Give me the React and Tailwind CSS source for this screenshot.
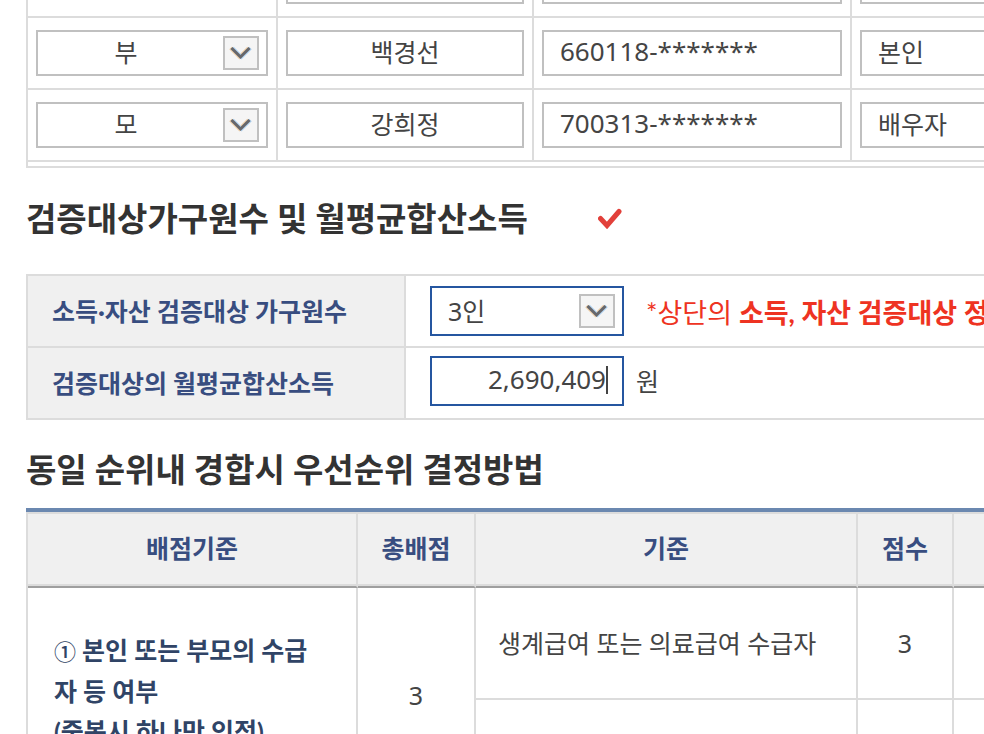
import React from "react";

const KOREAN = "font-['Lato','Noto_Sans_CJK_KR',sans-serif]";
const MIXED = "font-['Noto_Sans','Noto_Sans_CJK_KR',sans-serif]";

function Arrow({ className }) {
  return (
    <span
      className={`pointer-events-none absolute right-[9px] flex h-[34px] w-9 items-center justify-center border-2 border-[#c0c0c0] bg-[#f5f5f5] ${className}`}
    >
      <svg width="24" height="18" viewBox="0 0 24 18" fill="none" aria-hidden="true">
        <path d="M2.5 4 L11.5 13 L20.5 4" stroke="#efcfa8" strokeWidth="3.6" transform="translate(-1 0)" />
        <path d="M2.5 4 L11.5 13 L20.5 4" stroke="#b0d3f2" strokeWidth="3.6" transform="translate(1 0)" />
        <path d="M2.5 4 L11.5 13 L20.5 4" stroke="#67676b" strokeWidth="3" />
      </svg>
    </span>
  );
}

function RelationSelect({ value, label }) {
  return (
    <div className="relative">
      <select
        aria-label={label}
        defaultValue={value}
        className="block h-[46px] w-full appearance-none border-2 border-[#c0c0c0] bg-white pr-[52px] pb-[2px] text-center [text-align-last:center]"
      >
        <option>{value}</option>
      </select>
      <Arrow className="top-[6px]" />
    </div>
  );
}

function Field({ value, label, className }) {
  return (
    <input
      aria-label={label}
      defaultValue={value}
      className={`block h-[46px] w-full border-2 border-[#c0c0c0] bg-white px-4 pb-1 ${className}`}
    />
  );
}

const members = [
  { relation: "", name: "", number: "", role: "" },
  { relation: "부", name: "백경선", number: "660118-*******", role: "본인" },
  { relation: "모", name: "강희정", number: "700313-*******", role: "배우자" },
];

function MemberTable() {
  const cell = "h-[72px] border-r-2 border-b-2 border-[#dcdcdc] px-2 py-0";
  return (
    <div className="border-b-2 border-l-2 border-[#dcdcdc] pb-1">
      <table className="w-full table-fixed border-separate border-spacing-0 border-t-2 border-[#dcdcdc]">
        <colgroup>
          <col className="w-[250px]" />
          <col className="w-[256px]" />
          <col className="w-[318px]" />
          <col />
        </colgroup>
        <tbody>
          {members.map((m, i) => (
            <tr key={i}>
              <td className={cell}>
                {m.relation && <RelationSelect value={m.relation} label="관계" />}
              </td>
              <td className={cell}><Field value={m.name} label="성명" className="text-center" /></td>
              <td className={cell}><Field value={m.number} label="주민등록번호" className="text-[26px]" /></td>
              <td className={cell}><Field value={m.role} label="구분" className="text-left" /></td>
            </tr>
          ))}
        </tbody>
      </table>
    </div>
  );
}

function IncomeTable() {
  const th =
    `h-[72px] border-r-2 border-b-2 border-[#dcdcdc] bg-[#f0f0f0] py-0 pl-6 text-left font-bold whitespace-nowrap text-[#384d80] ${KOREAN}`;
  const td = "h-[72px] border-b-2 border-[#dcdcdc] py-0 pl-6";
  const box = "block h-[50px] w-full appearance-none border-2 border-[#2556a0] bg-white px-4 outline-none";
  return (
    <table className="w-full table-fixed border-separate border-spacing-0 border-t-2 border-l-2 border-[#dcdcdc]">
      <colgroup>
        <col className="w-[378px]" />
        <col />
      </colgroup>
      <tbody>
        <tr>
          <th scope="row" className={th}>
            <label htmlFor="household">소득·자산 검증대상 가구원수</label>
          </th>
          <td className={td}>
            <div className="flex items-center gap-[22px]">
              <div className="relative w-[194px] shrink-0">
                <select id="household" defaultValue="3인" className={box}>
                  <option>3인</option>
                </select>
                <Arrow className="top-2" />
              </div>
              <p className={`pt-1 text-[27px] leading-10 whitespace-nowrap text-[#ee3322] ${KOREAN}`}>
                *상단의 <strong className="font-bold">소득, 자산 검증대상 정보</strong>
              </p>
            </div>
          </td>
        </tr>
        <tr>
          <th scope="row" className={th}>
            <label htmlFor="income">검증대상의 월평균합산소득</label>
          </th>
          <td className={`${td} pb-1`}>
            <div className="flex items-center gap-3">
              <div className="relative w-[194px] shrink-0">
                <input
                  id="income"
                  defaultValue="2,690,409"
                  className={`${box} pb-1 text-right text-[26px] caret-transparent`}
                />
                <span className="absolute top-[10px] right-4 h-7 w-[2px] bg-[#444444]" />
              </div>
              <span>원</span>
            </div>
          </td>
        </tr>
      </tbody>
    </table>
  );
}

function PriorityTable() {
  const th =
    `h-[74px] border-r-2 border-b-2 border-r-[#dcdcdc] border-b-[#9f9f9f] bg-[#f0f0f0] p-0 pb-1 text-center font-bold text-[#384d80] shadow-[inset_0_-2px_0_#dcdcdc] ${KOREAN}`;
  const td = "border-r-2 border-b-2 border-[#dcdcdc] py-0";
  return (
    <div className="border-t-4 border-[#6b88b0]">
      <table className="w-full table-fixed border-separate border-spacing-0 border-t-2 border-l-2 border-[#dcdcdc]">
        <colgroup>
          <col className="w-[330px]" />
          <col className="w-[118px]" />
          <col className="w-[382px]" />
          <col className="w-[96px]" />
          <col />
        </colgroup>
        <thead>
          <tr>
            <th scope="col" className={th}>배점기준</th>
            <th scope="col" className={th}>총배점</th>
            <th scope="col" className={th}>기준</th>
            <th scope="col" className={th}>점수</th>
            <th scope="col" className={th}></th>
          </tr>
        </thead>
        <tbody>
          <tr>
            <th
              scope="row"
              rowSpan={2}
              className={`${td} pb-[10px] pl-[26px] text-left leading-10 font-bold whitespace-nowrap text-[#304466] ${KOREAN}`}
            >
              <span className={`text-[22px] font-medium ${MIXED}`}>①</span> 본인 또는 부모의 수급
              <br />
              자 등 여부
              <br />
              (중복시 하나만 인정)
            </th>
            <td rowSpan={2} className={`${td} text-center`}>3</td>
            <td className={`${td} h-[112px] pl-[22px] whitespace-nowrap ${KOREAN}`}>생계급여 또는 의료급여 수급자</td>
            <td className={`${td} text-center`}>3</td>
            <td className={td}></td>
          </tr>
          <tr>
            <td className={`${td} h-[104px]`}></td>
            <td className={td}></td>
            <td className={td}></td>
          </tr>
        </tbody>
      </table>
    </div>
  );
}

export default function App() {
  return (
    <div lang="ko" className={`h-screen overflow-hidden bg-white text-[25px] leading-9 text-[#444444] ${MIXED}`}>
      <main className="-mt-14 w-[130%] pl-[26px]">
        <MemberTable />
        <div className="mb-[6px] flex h-[100px] items-center gap-[70px]">
          <h2 className={`text-[33px] leading-10 font-bold text-[#333333] ${KOREAN}`}>검증대상가구원수 및 월평균합산소득</h2>
          <svg width="24" height="22" viewBox="0 0 24 22" fill="none" aria-label="확인">
            <path d="M2.5 11.5 L9 18.5 L21 4.5" stroke="#e2403a" strokeWidth="5" strokeLinecap="round" />
          </svg>
        </div>
        <IncomeTable />
        <h2 className={`flex h-[88px] items-center pt-[10px] text-[33px] leading-10 font-bold text-[#333333] ${KOREAN}`}>
          동일 순위내 경합시 우선순위 결정방법
        </h2>
        <PriorityTable />
      </main>
    </div>
  );
}
